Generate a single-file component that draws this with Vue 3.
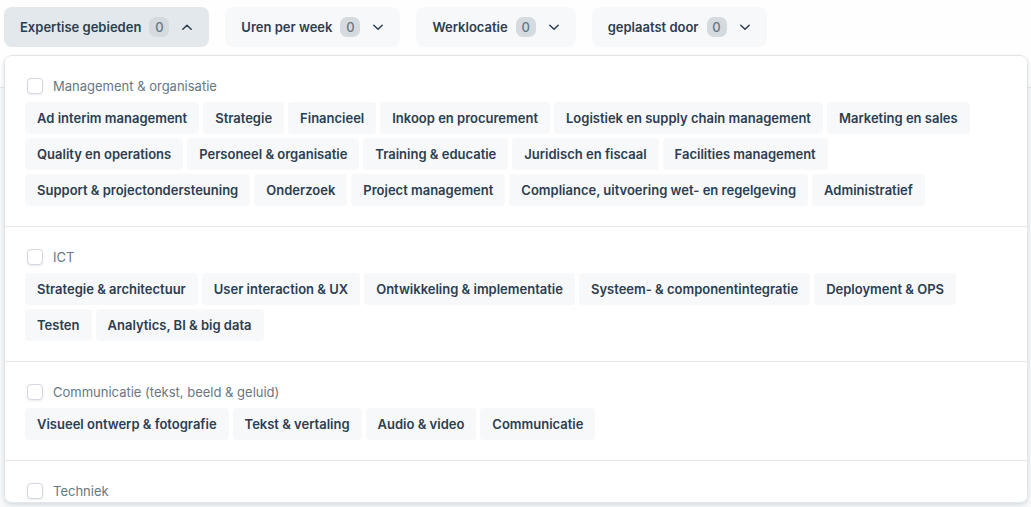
<template>
  <div class="page">
    <!-- Filter bar -->
    <div class="filters">
      <button
        v-for="filter in filters"
        :key="filter.label"
        type="button"
        class="filter"
        :class="{ active: filter.label === openFilter }"
        :aria-expanded="filter.label === openFilter"
        @click="toggle(filter.label)"
      >
        <span>{{ filter.label }}</span>
        <span class="count">{{ filter.label === 'Expertise gebieden' ? selected.length : 0 }}</span>
        <svg class="chevron" viewBox="0 0 12 12" width="12" height="12" aria-hidden="true">
          <path :d="filter.label === openFilter ? 'M1.8 8.2 6 4.2l4.2 4' : 'M1.8 4.2 6 8.2l4.2-4'" />
        </svg>
      </button>
    </div>

    <!-- Dropdown panel -->
    <div v-if="openFilter === 'Expertise gebieden'" class="panel">
      <section v-for="group in groups" :key="group.title" class="group">
        <label class="group-title">
          <input v-model="selected" type="checkbox" :value="group.title" />
          <span>{{ group.title }}</span>
        </label>
        <div v-if="group.items.length" class="chips">
          <button v-for="item in group.items" :key="item" type="button" class="chip">{{ item }}</button>
        </div>
      </section>
    </div>
  </div>
</template>

<script setup>
import { ref } from 'vue'

const openFilter = ref('Expertise gebieden')
const selected = ref([])

const filters = [
  { label: 'Expertise gebieden' },
  { label: 'Uren per week' },
  { label: 'Werklocatie' },
  { label: 'geplaatst door' }
]

const groups = [
  {
    title: 'Management & organisatie',
    items: [
      'Ad interim management',
      'Strategie',
      'Financieel',
      'Inkoop en procurement',
      'Logistiek en supply chain management',
      'Marketing en sales',
      'Quality en operations',
      'Personeel & organisatie',
      'Training & educatie',
      'Juridisch en fiscaal',
      'Facilities management',
      'Support & projectondersteuning',
      'Onderzoek',
      'Project management',
      'Compliance, uitvoering wet- en regelgeving',
      'Administratief'
    ]
  },
  {
    title: 'ICT',
    items: [
      'Strategie & architectuur',
      'User interaction & UX',
      'Ontwikkeling & implementatie',
      'Systeem- & componentintegratie',
      'Deployment & OPS',
      'Testen',
      'Analytics, BI & big data'
    ]
  },
  {
    title: 'Communicatie (tekst, beeld & geluid)',
    items: ['Visueel ontwerp & fotografie', 'Tekst & vertaling', 'Audio & video', 'Communicatie']
  },
  { title: 'Techniek', items: [] }
]

const toggle = (label) => {
  openFilter.value = openFilter.value === label ? '' : label
}
</script>

<style>
body {
  background: #fdfdfe;
}
</style>

<style scoped>
.page {
  box-sizing: border-box;
  height: 100vh;
  display: flex;
  flex-direction: column;
  gap: 8px;
  padding: 7px 3px 4px 4px;
  background: linear-gradient(#fefefe 87px, #e2e6ea 87px, #e2e6ea 88px, #f7f9fb 88px);
  font-family: Inter, sans-serif;
  font-size: 13px;
  line-height: 20px;
  color: #2c3e50;
}

button {
  border: none;
  font: inherit;
  font-weight: 600;
  color: inherit;
  cursor: pointer;
}

.filters {
  display: flex;
  gap: 16px;
}

.filter {
  display: flex;
  align-items: center;
  height: 40px;
  padding: 0 16px;
  border-radius: 8px;
  background: #f7f8fa;
}

.filter.active {
  background: #e2e8ec;
}

.count {
  min-width: 20px;
  margin-left: 8px;
  border-radius: 7px;
  background: #d5dadf;
  color: #677784;
  font-weight: 500;
  text-align: center;
}

.chevron {
  margin-left: 12px;
  fill: none;
  stroke: #2c3e50;
  stroke-width: 1.5;
  stroke-linecap: round;
  stroke-linejoin: round;
}

.panel {
  flex: 1;
  min-height: 0;
  overflow-y: auto;
  scrollbar-width: none;
  border: 1px solid #e2e6ea;
  border-radius: 8px;
  background: #fff;
  box-shadow: 0 2px 4px rgba(44, 62, 80, 0.16);
}

.group {
  padding: 20px;
  border-bottom: 1px solid #e2e8ec;
}

.group:last-child {
  border-bottom: none;
}

.group-title {
  display: flex;
  align-items: center;
  gap: 10px;
  width: fit-content;
  margin: 0 0 6px 2px;
  color: #677784;
}

.group-title input {
  appearance: none;
  box-sizing: border-box;
  width: 16px;
  height: 16px;
  margin: 0;
  border: 1px solid #d3d7df;
  border-radius: 4px;
  background: #fff;
  box-shadow: 0 1px 2px rgba(44, 62, 80, 0.1);
}

.group-title input:checked {
  border-color: #2c3e50;
  background: #2c3e50;
}

.chips {
  display: flex;
  flex-wrap: wrap;
  gap: 4px;
}

.chip {
  height: 32px;
  padding: 0 12px;
  border-radius: 4px;
  background: #f7f8fa;
}
</style>
